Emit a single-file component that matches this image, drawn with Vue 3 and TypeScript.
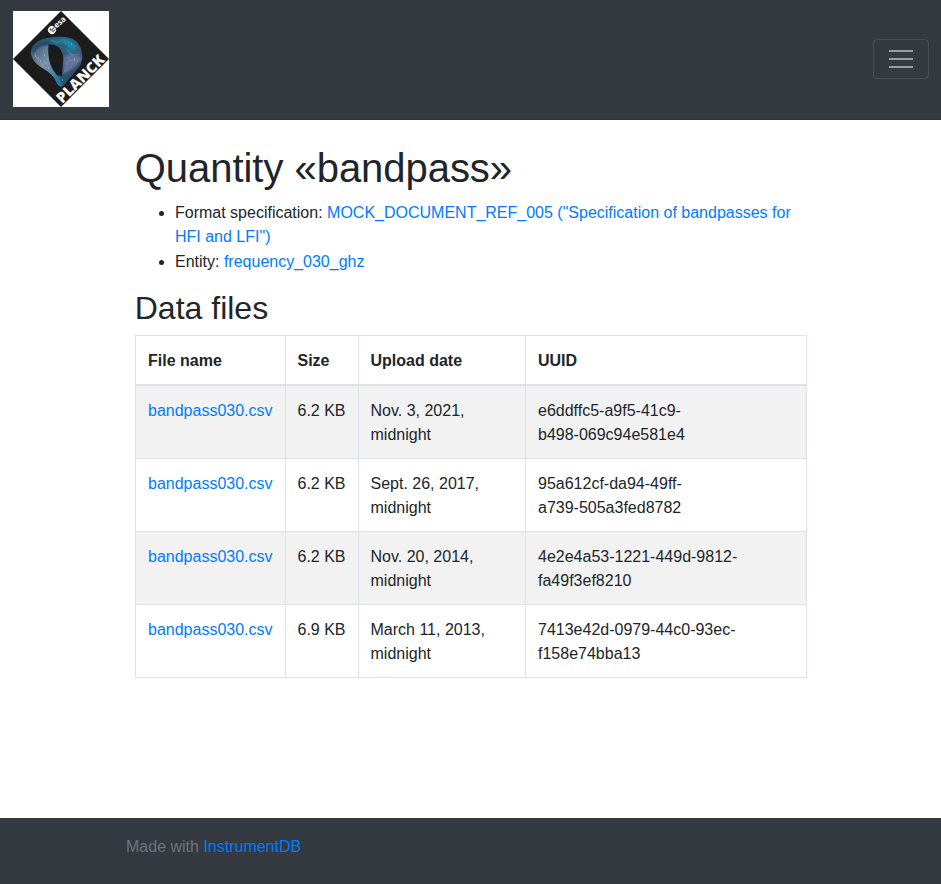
<script setup lang="ts">
interface DataFile {
  name: string
  size: string
  date: string
  // UUID split where the table cell wraps it
  uuid: [string, string]
}

const files: DataFile[] = [
  { name: 'bandpass030.csv', size: '6.2 KB', date: 'Nov. 3, 2021, midnight', uuid: ['e6ddffc5-a9f5-41c9-', 'b498-069c94e581e4'] },
  { name: 'bandpass030.csv', size: '6.2 KB', date: 'Sept. 26, 2017, midnight', uuid: ['95a612cf-da94-49ff-', 'a739-505a3fed8782'] },
  { name: 'bandpass030.csv', size: '6.2 KB', date: 'Nov. 20, 2014, midnight', uuid: ['4e2e4a53-1221-449d-9812-', 'fa49f3ef8210'] },
  { name: 'bandpass030.csv', size: '6.9 KB', date: 'March 11, 2013, midnight', uuid: ['7413e42d-0979-44c0-93ec-', 'f158e74bba13'] },
]
</script>

<template>
  <div class="page">
    <header class="navbar">
      <a class="brand" href="#" aria-label="Planck">
        <svg class="logo" viewBox="0 0 96 96" width="96" height="96">
          <defs>
            <linearGradient id="ring" x1="0" y1="0" x2="1" y2="1">
              <stop offset="0" stop-color="#274b68" />
              <stop offset="0.35" stop-color="#2b617f" />
              <stop offset="0.6" stop-color="#43597a" />
              <stop offset="1" stop-color="#20394f" />
            </linearGradient>
            <linearGradient id="inner" x1="0" y1="0" x2="0.8" y2="1">
              <stop offset="0" stop-color="#3f5b79" />
              <stop offset="0.5" stop-color="#7e91a9" />
              <stop offset="1" stop-color="#2a7da8" />
            </linearGradient>
            <filter id="soft" x="-20%" y="-20%" width="140%" height="140%">
              <feGaussianBlur stdDeviation="1" />
            </filter>
            <clipPath id="shape">
              <path d="M18 43C17 35 24 29 34 27C44 25 57 25 63 30C70 37 71 48 67 55C61 62 55 69 50 75C47 77 45 74 43 70C40 63 34 60 28 56C22 52 19 48 18 43Z" />
            </clipPath>
          </defs>
          <rect width="96" height="96" fill="#fff" />
          <path d="M48 0L96 48L48 96L0 48Z" fill="#1c1c1c" />
          <g clip-path="url(#shape)">
            <rect x="16" y="24" width="56" height="54" fill="url(#ring)" />
            <path d="M18 40Q22 34 36 34Q33 53 44 65L48 77Q27 68 18 43Z" fill="url(#inner)" />
            <g filter="url(#soft)">
              <path d="M48 28Q57 27 64 36L61 41Q54 34 48 31Z" fill="#168da8" />
              <path d="M38 28L48 28L50 32L38 31Z" fill="#236f8c" />
              <path d="M51 46Q58 40 69 47Q65 55 51 63Z" fill="#62749a" />
              <path d="M49 65L58 58L53 74L45 77Z" fill="#2c4f6d" />
              <path d="M18 40Q24 30 39 31L34 34Q25 35 20 43Z" fill="#2a4862" />
              <path d="M39 67L45 64L49 74L45 77Z" fill="#247da3" />
              <path d="M53 36L63 38L56 43Z" fill="#237792" />
            </g>
            <path d="M22 42l3 7 5 4M27 54l6-3M38 29l6 3 4-2M54 39l4 5 9-1M53 53l5-4 7 1M50 62l3-4" fill="none" stroke="#9bafbd" stroke-width="0.7" opacity="0.5" />
            <path d="M25 47h1M31 44h1M29 55h1M35 57h1M58 33h1M61 48h1M49 69h1M22 45h1M27 50h1" stroke="#b3bfcd" stroke-width="1" />
          </g>
          <path d="M35.500 33.500Q42 33 46 36.500Q51 42 50 51L49 65.500L44 64Q34 53 35.500 33.500Z" fill="#191b1c" />
          <g transform="translate(39 19) rotate(-43)">
            <circle r="4" fill="#f4f4f4" />
            <path d="M4 -.4H-.8M-.8 -.4Q-2 -2 0 -2.200M-.8 .8Q0 2.400 3 1.800" fill="none" stroke="#1c1c1c" stroke-width="0.9" />
            <text class="esa" x="4.500" y="2.300" textLength="13" lengthAdjust="spacingAndGlyphs">esa</text>
          </g>
          <text class="planck" transform="translate(49.300 93) rotate(-45)" textLength="61" lengthAdjust="spacingAndGlyphs">PLANCK</text>
        </svg>
      </a>
      <button class="toggler" type="button" aria-label="Toggle navigation">
        <svg viewBox="0 0 30 30" width="30" height="30">
          <path d="M3 7h24M3 15h24M3 23h24" stroke="rgba(255,255,255,.5)" stroke-width="2" />
        </svg>
      </button>
    </header>

    <main class="content">
      <h1>Quantity «bandpass»</h1>
      <ul>
        <li>Format specification: <a href="#">MOCK_DOCUMENT_REF_005 ("Specification of bandpasses for HFI and LFI")</a></li>
        <li>Entity: <a href="#">frequency_030_ghz</a></li>
      </ul>
      <h2>Data files</h2>
      <table>
        <colgroup>
          <col class="col-name" />
          <col class="col-size" />
          <col class="col-date" />
          <col />
        </colgroup>
        <thead>
          <tr>
            <th>File name</th>
            <th class="size">Size</th>
            <th class="date">Upload date</th>
            <th>UUID</th>
          </tr>
        </thead>
        <tbody>
          <tr v-for="file in files" :key="file.uuid[0]">
            <td><a href="#">{{ file.name }}</a></td>
            <td class="size">{{ file.size }}</td>
            <td class="date">{{ file.date }}</td>
            <td>{{ file.uuid[0] }}<br />{{ file.uuid[1] }}</td>
          </tr>
        </tbody>
      </table>
    </main>

    <footer class="footer">
      <div class="footer-inner">Made with <a href="#">InstrumentDB</a></div>
    </footer>
  </div>
</template>

<style>
body {
  margin: 0;
  background: #fff;
}
</style>

<style scoped>
.page {
  display: flex;
  flex-direction: column;
  min-height: 884px;
  font: 16px/24px "Liberation Sans", Arial, sans-serif;
  color: #212529;
}
.page *,
.page {
  box-sizing: border-box;
}
a {
  color: #007bff;
  text-decoration: none;
}
.navbar {
  display: flex;
  align-items: center;
  justify-content: space-between;
  height: 120px;
  padding: 0 12px 1px 13px;
  border-bottom: 1px solid #35333a;
  background: #343a40;
}
.logo,
.toggler svg {
  display: block;
}
.logo {
  overflow: visible;
}
.esa {
  font: bold 8px "Open Sans", sans-serif;
  fill: #fff;
}
.planck {
  font: 800 14.5px "Open Sans", sans-serif;
  fill: #fff;
}
.toggler {
  display: flex;
  align-items: center;
  justify-content: center;
  width: 56px;
  height: 40px;
  padding: 0;
  border: 1px solid rgba(255, 255, 255, 0.1);
  border-radius: 4px;
  background: transparent;
}
.content {
  flex: 1;
  width: 671.5px;
  margin: 0 auto;
  padding-top: 24px;
}
h1,
h2 {
  margin: 0 0 8px;
  font-weight: 500;
  line-height: 1.2;
}
h1 {
  margin-bottom: 9px;
  font-size: 40px;
  letter-spacing: -0.04px;
}
h2 {
  font-size: 32px;
}
ul {
  margin: 0 0 15px;
  padding-left: 40.25px;
}
li + li {
  padding-top: 1px;
}
table {
  width: 672px;
  table-layout: fixed;
  border-collapse: collapse;
}
.col-name {
  width: 150px;
}
.col-size {
  width: 73px;
}
.col-date {
  width: 167px;
}
th,
td {
  padding: 13px 12px 11px 12.25px;
  border: 1px solid #dee2e6;
  text-align: left;
  vertical-align: top;
}
th {
  border-bottom-width: 2px;
}
tbody tr:nth-child(odd) {
  background: #f2f2f2;
}
.size {
  padding-left: 11.75px;
  padding-right: 0;
  white-space: nowrap;
}
.date {
  padding-left: 11.75px;
  padding-right: 32px;
}
.footer {
  height: 66px;
  padding-top: 17px;
  background: #343a40;
  color: #6c757d;
}
.footer-inner {
  width: 689px;
  margin: 0 auto;
}
</style>
